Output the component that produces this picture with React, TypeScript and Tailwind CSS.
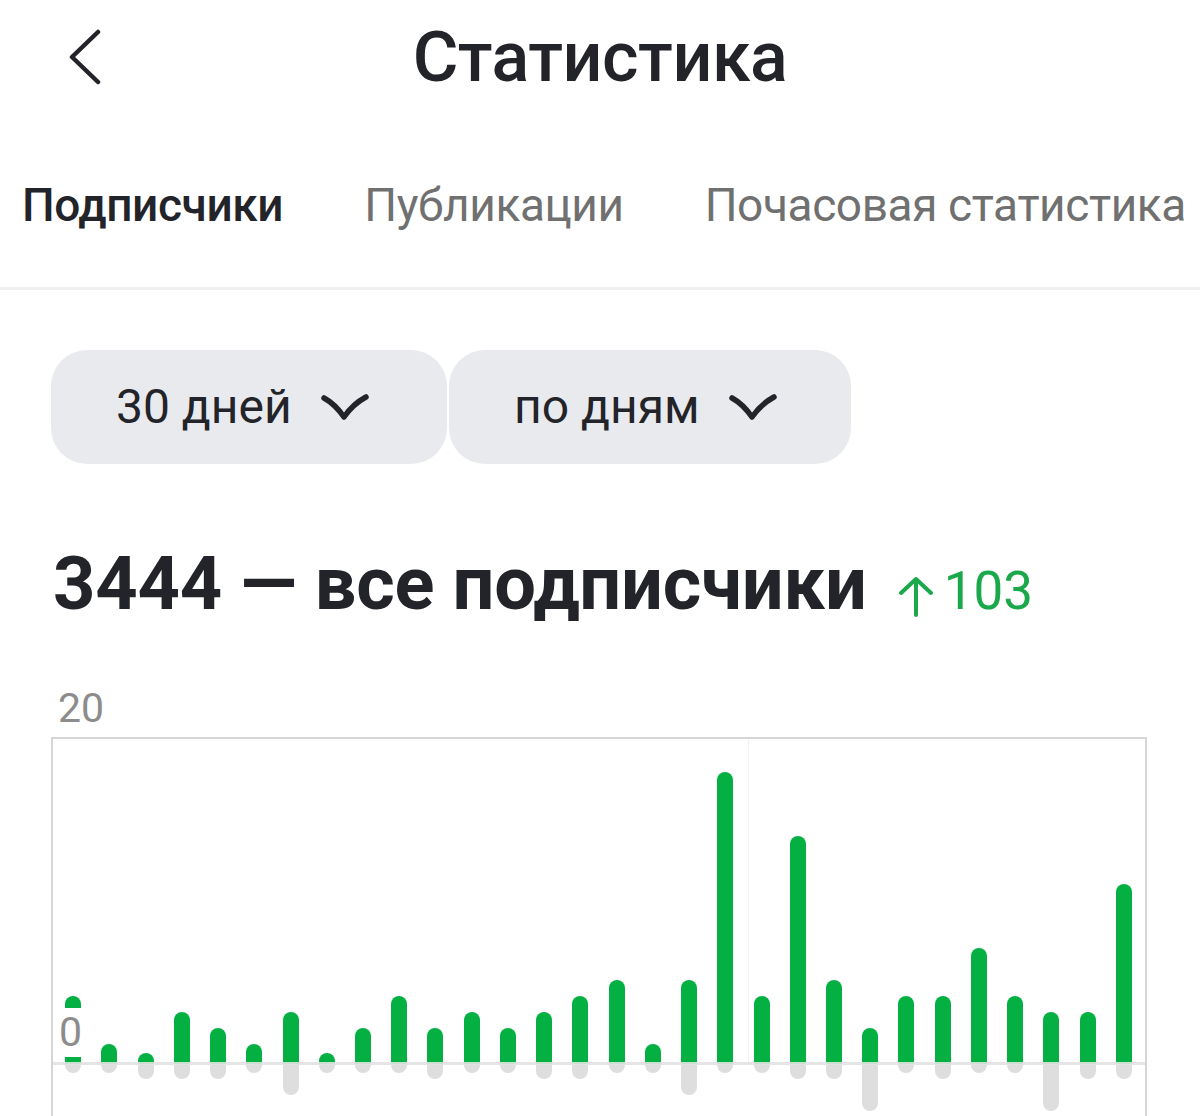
// subscribers gained (px above the baseline) and lost (px below it), one entry per day
const gained = [68, 20, 11, 52, 36, 20, 52, 11, 36, 68, 36, 52, 36, 52, 68, 84, 20, 84, 292, 68, 228, 84, 36, 68, 68, 116, 68, 52, 52, 180];
const lost = [9, 9, 15, 15, 15, 9, 31, 9, 9, 9, 15, 9, 9, 15, 15, 9, 9, 31, 9, 9, 15, 15, 47, 9, 15, 9, 9, 47, 15, 15];

const tabs = ['Подписчики', 'Публикации', 'Почасовая статистика'];

const Chevron = () => (
  <svg width="48" height="30" viewBox="0 0 48 30" fill="none">
    <path d="M3 6 Q14 12 23 25 Q32 12 45 5" stroke="#23232a" strokeWidth="5.5" strokeLinecap="round" strokeLinejoin="round" />
  </svg>
);

const BackIcon = () => (
  <svg width="36" height="56" viewBox="0 0 36 56" fill="none">
    <path d="M31 3 L5 28 L31 53" stroke="#23232a" strokeWidth="4.5" strokeLinecap="round" strokeLinejoin="round" />
  </svg>
);

const Dropdown = ({ label, width }: { label: string; width: string }) => (
  <button className={`${width} h-[114px] rounded-[36px] bg-[#e9eaed] flex items-center pl-[65px] gap-[29px] text-[48px] text-[#23232a]`}>
    <span className="leading-none">{label}</span>
    <Chevron />
  </button>
);

const App = () => {
  return (
    <div className="w-[1200px] h-[1116px] overflow-hidden bg-white text-[#23232a]" style={{ fontFamily: 'Roboto, "Noto Sans", sans-serif' }}>
      {/* top bar */}
      <header className="grid grid-cols-[1fr_auto_1fr] items-center h-[114px]">
        <div className="pl-[67px] flex items-center">
          <BackIcon />
        </div>
        <h1 className="text-[70px] font-medium leading-none tracking-[-0.5px]">Статистика</h1>
        <div />
      </header>

      {/* tabs */}
      <nav className="flex gap-[81px] pl-[22px] pt-[68px] h-[176px] border-b-[3px] border-[#f0f0f2] whitespace-nowrap">
        {tabs.map((t, i) => (
          <span
            key={t}
            className={`text-[46px] leading-none tracking-[-0.4px] ${i === 0 ? 'text-[#23232a] font-medium' : 'text-[#707070]'}`}
          >
            {t}
          </span>
        ))}
      </nav>

      {/* period filters */}
      <div className="flex gap-[2px] pl-[51px] mt-[60px]">
        <Dropdown label="30 дней" width="w-[396px]" />
        <Dropdown label="по дням" width="w-[402px]" />
      </div>

      {/* total */}
      <div className="flex items-baseline pl-[53px] mt-[83px] whitespace-nowrap">
        <h2 className="text-[74px] font-bold leading-none tracking-[-0.2px]">3444 — все подписчики</h2>
        <span className="ml-[31px] flex items-baseline text-[53px] leading-none text-[#1aa84a]">
          <svg width="36" height="41" viewBox="0 0 36 41" fill="none" className="mr-[10px] self-end mb-[1px]">
            <path d="M18 39 V3 M3 17 L18 3 L33 17" stroke="#1aa84a" strokeWidth="4" strokeLinecap="round" strokeLinejoin="round" />
          </svg>
          103
        </span>
      </div>

      {/* chart */}
      <div className="pl-[58px] mt-[67px] text-[41px] leading-none text-[#8c8c8c]">20</div>
      <div className="relative ml-[51px] mt-[8px] w-[1096px] h-[420px] border-l-2 border-t-2 border-r-2 border-[#d6d6d6]">
        <div className="absolute left-[695px] top-0 h-[325px] w-px bg-[#f2f2f2]" />
        <div className="relative grid grid-cols-30 pl-[2px] pr-[3px]">
          {gained.map((g, i) => (
            <div key={i} className="flex flex-col items-center">
              <div className="h-[325px] flex items-end">
                <div className="w-[16px] rounded-t-full bg-[#05b043]" style={{ height: g }} />
              </div>
              <div className="w-[16px] rounded-b-full bg-[#dedede]" style={{ height: lost[i] }} />
            </div>
          ))}
          <div className="absolute left-0 right-0 top-[323px] h-[3px] bg-[#e2e2e2] opacity-90" />
          <div className="absolute left-[5px] top-[269px] bg-white px-[1px] py-[4px] text-[41px] leading-none text-[#8c8c8c]">0</div>
        </div>
      </div>
    </div>
  );
};

export default App;
